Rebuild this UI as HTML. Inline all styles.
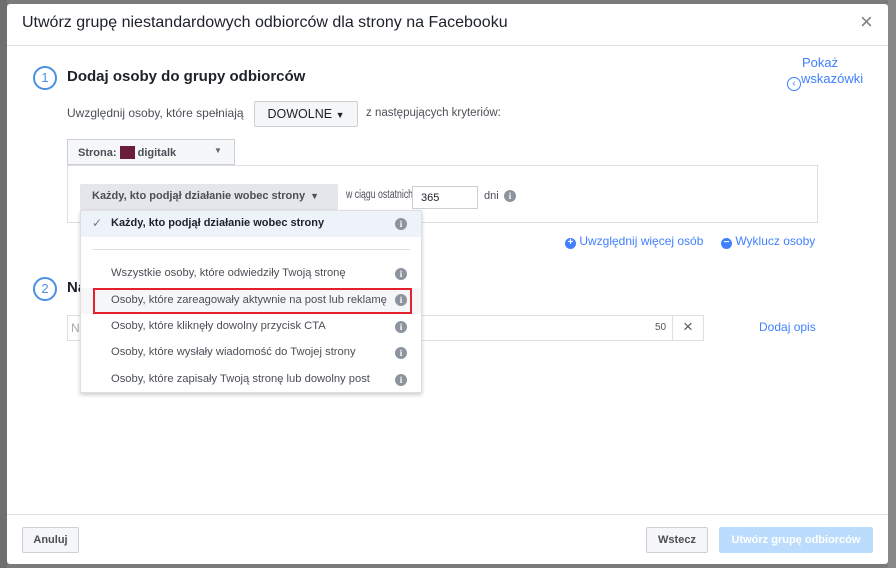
<!DOCTYPE html>
<html><head><meta charset="utf-8"><style>
*{box-sizing:border-box;margin:0;padding:0}
body{width:896px;height:568px;background:#7b7b7b;font-family:"Liberation Sans",Arial,sans-serif;position:relative;overflow:hidden;color:#4b4f56;font-size:12px}
.a{position:absolute;white-space:nowrap}
.modal{left:7px;top:4px;width:881px;height:560px;background:#fff;border-radius:3px}
.circ{width:24px;height:24px;border:2px solid #4a90e2;border-radius:50%;color:#4a90e2;font-size:13px;text-align:center;line-height:20px}
.btn{border:1px solid #ccd0d5;background:#f5f6f7;border-radius:2px;font-weight:bold;color:#4b4f56;font-size:11px;text-align:center}
.info{width:12px;height:12px;border-radius:50%;background:#8d949e;color:#fff;font-size:9px;font-weight:bold;text-align:center;line-height:12px;font-family:"Liberation Serif",serif}
.item{left:111px;font-size:11.2px;color:#4b4f56}
.blue{color:#4080ff}
</style></head><body>
<div class="a" style="left:888px;top:0;width:8px;height:568px;background:#888"></div>
<div class="a" style="left:0;top:0;width:7px;height:568px;background:#6f6f6f"></div>
<div class="a modal"></div>
<div class="a" style="left:22px;top:14px;font-size:16px;color:#1d2129">Utwórz grupę niestandardowych odbiorców dla strony na Facebooku</div>
<div class="a" style="left:860px;top:9px;font-size:22px;color:#7f7f7f;font-weight:300">×</div>
<div class="a" style="left:7px;top:45px;width:881px;height:1px;background:#dddfe2"></div>

<div class="a circ" style="left:33px;top:66px">1</div>
<div class="a" style="left:67px;top:68px;font-size:15px;font-weight:bold;color:#1d2129">Dodaj osoby do grupy odbiorców</div>
<div class="a blue" style="left:802px;top:55px;font-size:13px">Pokaż</div>
<div class="a blue" style="left:787px;top:71px;font-size:13px"><span style="display:inline-block;width:14px;height:14px;border:1px solid #4080ff;border-radius:50%;font-size:10px;line-height:12px;text-align:center;vertical-align:-3px">‹</span>wskazówki</div>

<div class="a" style="left:67px;top:106px">Uwzględnij osoby, które spełniają</div>
<div class="a btn" style="left:254px;top:101px;width:104px;height:26px;line-height:24px;font-size:12.5px;font-weight:normal;color:#1d2129">DOWOLNE <span style="font-size:9px">▼</span></div>
<div class="a" style="left:366px;top:107px;font-size:11.5px">z następujących kryteriów:</div>

<div class="a" style="left:67px;top:139px;width:168px;height:26px;border:1px solid #ccd0d5;background:#f6f7f9"></div>
<div class="a" style="left:78px;top:146px;font-weight:bold;font-size:11px">Strona: <span style="display:inline-block;width:15px;height:13px;background:#6b1e3c;vertical-align:-3px"></span> digitalk</div>
<div class="a" style="left:214px;top:146px;font-size:8px;color:#666">▼</div>
<div class="a" style="left:67px;top:165px;width:751px;height:58px;border:1px solid #dddfe2"></div>
<div class="a" style="left:80px;top:184px;width:258px;height:26px;background:#e4e6eb;border-radius:2px"></div>
<div class="a" style="left:92px;top:190px;font-weight:bold;font-size:11px">Każdy, kto podjął działanie wobec strony <span style="font-size:9px;margin-left:2px">▼</span></div>
<div class="a" style="left:346px;top:189px;font-size:11.5px;transform:scaleX(.76);transform-origin:left">w ciągu ostatnich</div>
<div class="a" style="left:412px;top:186px;width:66px;height:23px;border:1px solid #ccd0d5;padding:5px 8px;font-size:11px;color:#1d2129;background:#fff">365</div>
<div class="a" style="left:484px;top:190px;font-size:11px">dni</div>
<div class="a info" style="left:504px;top:190px">i</div>

<div class="a blue" style="left:565px;top:234px;font-size:12px"><span style="display:inline-block;width:11px;height:11px;border-radius:50%;background:#4080ff;color:#fff;font-size:10px;line-height:10px;text-align:center;font-weight:bold">+</span> Uwzględnij więcej osób</div>
<div class="a blue" style="left:721px;top:234px;font-size:12px"><span style="display:inline-block;width:11px;height:11px;border-radius:50%;background:#4080ff;color:#fff;font-size:10px;line-height:10px;text-align:center;font-weight:bold">−</span> Wyklucz osoby</div>

<div class="a circ" style="left:33px;top:277px">2</div>
<div class="a" style="left:67px;top:279px;font-size:15px;font-weight:bold;color:#1d2129">Na</div>
<div class="a" style="left:67px;top:315px;width:637px;height:26px;border:1px solid #dddfe2"></div>
<div class="a" style="left:672px;top:315px;width:1px;height:26px;background:#dddfe2"></div>
<div class="a" style="left:71px;top:321px;color:#aaa">N</div>
<div class="a" style="left:655px;top:322px;font-size:10px;color:#555">50</div>
<div class="a" style="left:683px;top:317px;font-size:17px;color:#555">×</div>
<div class="a blue" style="left:759px;top:320px;font-size:12px">Dodaj opis</div>

<div class="a" style="left:80px;top:210px;width:342px;height:183px;background:#fff;border:1px solid #dddfe2;box-shadow:0 2px 4px rgba(0,0,0,.2)"></div>
<div class="a" style="left:81px;top:211px;width:340px;height:26px;background:#eef3fa"></div>
<div class="a" style="left:92px;top:216px;font-size:12px;color:#777">✓</div>
<div class="a" style="left:111px;top:217px;font-weight:bold;font-size:11px;color:#1d2129">Każdy, kto podjął działanie wobec strony</div>
<div class="a info" style="left:395px;top:218px">i</div>
<div class="a" style="left:92px;top:249px;width:318px;height:1px;background:#dddfe2"></div>
<div class="a" style="left:81px;top:288px;width:340px;height:26px;background:#f5f6f7"></div>
<div class="a item" style="top:267px">Wszystkie osoby, które odwiedziły Twoją stronę</div>
<div class="a item" style="top:294px">Osoby, które zareagowały aktywnie na post lub reklamę</div>
<div class="a item" style="top:320px">Osoby, które kliknęły dowolny przycisk CTA</div>
<div class="a item" style="top:346px">Osoby, które wysłały wiadomość do Twojej strony</div>
<div class="a item" style="top:373px">Osoby, które zapisały Twoją stronę lub dowolny post</div>
<div class="a info" style="left:395px;top:268px">i</div>
<div class="a info" style="left:395px;top:294px">i</div>
<div class="a info" style="left:395px;top:321px">i</div>
<div class="a info" style="left:395px;top:347px">i</div>
<div class="a info" style="left:395px;top:374px">i</div>
<div class="a" style="left:93px;top:288px;width:319px;height:26px;border:2px solid #e3202b"></div>

<div class="a" style="left:7px;top:514px;width:881px;height:1px;background:#dddfe2"></div>
<div class="a btn" style="left:22px;top:527px;width:57px;height:26px;line-height:24px">Anuluj</div>
<div class="a btn" style="left:646px;top:527px;width:62px;height:26px;line-height:24px">Wstecz</div>
<div class="a" style="left:719px;top:527px;width:154px;height:26px;line-height:26px;background:#bcdcfd;color:#fff;font-weight:bold;font-size:11px;text-align:center;border-radius:2px">Utwórz grupę odbiorców</div>
</body></html>
